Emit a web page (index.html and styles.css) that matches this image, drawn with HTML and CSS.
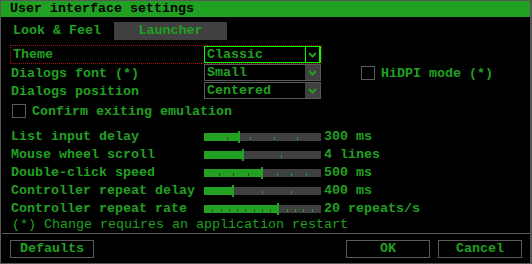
FILE: index.html
```html
<!DOCTYPE html>
<html>
  <head>
    <meta charset="utf-8">
    <title>User interface settings</title>
    <link rel="stylesheet" href="styles.css">
  </head>
  <body>
    <div class="window">
      <div class="titlebar">User interface settings</div>

      <div class="content">
        <div class="tabs">
          <span class="tabs-label">Look &amp; Feel</span>
          <span class="tab">Launcher</span>
        </div>

        <div class="form-row focused">
          <span class="label">Theme</span>
          <div class="select active">
            <span class="select-value">Classic</span>
            <span class="select-arrow"><svg width="9" height="6" viewBox="0 0 9 6"><path d="M1 1 L4.5 4.5 L8 1" /></svg></span>
          </div>
        </div>
        <div class="form-row">
          <span class="label">Dialogs font (*)</span>
          <div class="select">
            <span class="select-value">Small</span>
            <span class="select-arrow"><svg width="9" height="6" viewBox="0 0 9 6"><path d="M1 1 L4.5 4.5 L8 1" /></svg></span>
          </div>
          <label class="check hidpi"><span class="box"></span>HiDPI mode (*)</label>
        </div>
        <div class="form-row">
          <span class="label">Dialogs position</span>
          <div class="select">
            <span class="select-value">Centered</span>
            <span class="select-arrow"><svg width="9" height="6" viewBox="0 0 9 6"><path d="M1 1 L4.5 4.5 L8 1" /></svg></span>
          </div>
        </div>

        <label class="check confirm"><span class="box"></span>Confirm exiting emulation</label>

        <div class="sliders">
          <div class="slider-row">
            <span class="label">List input delay</span>
            <div class="slider">
              <div class="slider-fill" style="width:34px"></div>
              <div class="slider-ticks"><i></i><i class="on"></i><i></i><i></i><i></i><i></i></div>
            </div>
            <span class="value">300 ms</span>
          </div>
          <div class="slider-row">
            <span class="label">Mouse wheel scroll</span>
            <div class="slider">
              <div class="slider-fill" style="width:38px"></div>
              <div class="slider-ticks"><i></i><i class="on"></i><i></i><i></i></div>
            </div>
            <span class="value">4 lines</span>
          </div>
          <div class="slider-row">
            <span class="label">Double-click speed</span>
            <div class="slider">
              <div class="slider-fill" style="width:57px"></div>
              <div class="slider-ticks"><i></i><i class="on"></i><i class="on"></i><i class="on"></i><i class="on"></i><i></i><i></i><i></i><i></i></div>
            </div>
            <span class="value">500 ms</span>
          </div>
          <div class="slider-row">
            <span class="label">Controller repeat delay</span>
            <div class="slider">
              <div class="slider-fill" style="width:28px"></div>
              <div class="slider-ticks"><i></i><i class="on"></i><i></i><i></i><i></i></div>
            </div>
            <span class="value">400 ms</span>
          </div>
          <div class="slider-row">
            <span class="label">Controller repeat rate</span>
            <div class="slider">
              <div class="slider-fill" style="width:73px"></div>
              <div class="slider-ticks"><i></i><i class="on"></i><i class="on"></i><i class="on"></i><i class="on"></i><i class="on"></i><i class="on"></i><i class="on"></i><i class="on"></i><i class="on"></i><i></i><i></i><i></i><i></i><i></i></div>
            </div>
            <span class="value">20 repeats/s</span>
          </div>
        </div>

        <div class="note">(*) Change requires an application restart</div>
      </div>

      <div class="footer">
        <button class="button">Defaults</button>
        <button class="button push">OK</button>
        <button class="button">Cancel</button>
      </div>
    </div>
  </body>
</html>
```

FILE: styles.css
```css
*{
  box-sizing: border-box;
}
html, body{
  margin: 0;
  background: #000;
}
body{
  font-family: "Liberation Mono", "DejaVu Sans Mono", monospace;
  font-size: 13.333px;
  font-weight: bold;
  color: #22a022;
}
.window{
  width: 532px;
  height: 264px;
  border: 1px solid #585858;
  border-right-width: 2px;
  display: flex;
  flex-direction: column;
}
.titlebar{
  height: 16px;
  line-height: 16px;
  background: #21a121;
  color: #000;
  padding-left: 9px;
  white-space: pre;
}
.content{
  height: 216px;
  padding: 5px 0 0 10px;
  display: flex;
  flex-direction: column;
}

/* tabs */
.tabs{
  display: flex;
  height: 18px;
  line-height: 18px;
}
.tabs-label{
  width: 103px;
  padding-left: 2px;
}
.tab{
  width: 113px;
  text-align: center;
  background: #404040;
}

/* dropdown rows */
.form-row{
  display: flex;
  align-items: center;
  height: 18px;
}
.form-row.focused{
  margin: 5px 0 0 -1px;
  width: 312px;
  height: 19px;
  border: 1px dotted #a01414;
  align-items: flex-start;
}
.label{
  width: 193px;
  flex: none;
  white-space: pre;
}
.form-row .label{
  padding-top: 1px;
}
.form-row.focused .label{
  padding-left: 2px;
}
.select{
  width: 117px;
  height: 17px;
  border: 1px solid #5a5a5a;
  display: flex;
  align-self: flex-start;
}
.select-value{
  flex: 1;
  padding-left: 2px;
  line-height: 15px;
}
.select-arrow{
  width: 15px;
  display: flex;
  align-items: center;
  justify-content: center;
  background: #404040;
}
.select-arrow path{
  fill: none;
  stroke: #22a022;
  stroke-width: 2;
}
.select.active{
  border-color: #00ff00;
  border-right-width: 2px;
}
.select.active .select-arrow{
  width: 14px;
  border-left: 1px solid #00ff00;
  background: #000;
}

/* checkboxes */
.check{
  display: flex;
  align-items: center;
  white-space: pre;
}
.box{
  width: 14px;
  height: 14px;
  border: 1px solid #5a5a5a;
  margin-right: 6px;
}
.hidpi{
  margin-left: 40px;
}
.confirm{
  margin: 2px 0 0 1px;
  height: 18px;
}

/* sliders */
.sliders{
  margin-top: 8px;
}
.slider-row{
  display: flex;
  height: 18px;
  line-height: 18px;
}
.slider{
  position: relative;
  width: 117px;
  height: 8px;
  margin-top: 5px;
  background: #404040;
}
.slider-fill{
  position: relative;
  height: 100%;
  background: #22a022;
}
.slider-fill::after{
  content: "";
  position: absolute;
  left: 100%;
  top: -2px;
  width: 2px;
  height: 12px;
  background: #22a022;
  z-index: 2;
}
.slider-ticks{
  position: absolute;
  inset: 0 0 1px 0;
  display: flex;
  justify-content: space-between;
  align-items: flex-end;
}
.slider-ticks i{
  width: 1px;
  height: 3px;
  background: #22a022;
}
.slider-ticks i.on{
  background: #404040;
}
.slider-ticks i:first-child,
.slider-ticks i:last-child{
  visibility: hidden;
}
.value{
  margin-left: 3px;
  white-space: pre;
}

.note{
  height: 15px;
  line-height: 14px;
  padding-left: 1px;
  font-weight: normal;
  white-space: pre;
}

/* bottom buttons */
.footer{
  border-top: 1px solid #585858;
  margin-left: 1px;
  padding: 6px 8px 0 8px;
  display: flex;
  gap: 8px;
}
.button{
  width: 84px;
  height: 18px;
  padding: 0;
  border: 1px solid #5a5a5a;
  background: #000;
  color: #22a022;
  font: inherit;
  line-height: 16px;
  text-align: center;
}
.push{
  margin-left: auto;
}
```
